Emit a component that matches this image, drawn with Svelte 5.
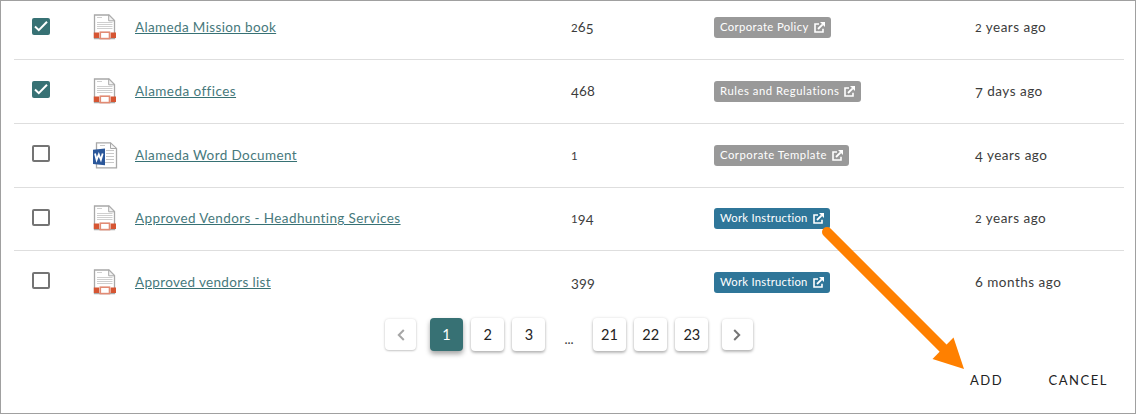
<script>
  const rows = [
    { name: 'Alameda Mission book', ls: 0.36, num: '265', tag: 'Corporate Policy', tls: 0.38, w: 117, age: '2 years ago', checked: true },
    { name: 'Alameda offices', ls: 0.44, num: '468', tag: 'Rules and Regulations', tls: 0.54, w: 147, age: '7 days ago', checked: true },
    { name: 'Alameda Word Document', ls: 0.4, num: '1', tag: 'Corporate Template', tls: 0.5, w: 135, age: '4 years ago', word: true },
    { name: 'Approved Vendors - Headhunting Services', ls: 0.39, num: '194', tag: 'Work Instruction', tls: 0.24, w: 116, age: '2 years ago', blue: true },
    { name: 'Approved vendors list', ls: 0.33, num: '399', tag: 'Work Instruction', tls: 0.24, w: 116, age: '6 months ago', blue: true }
  ];
</script>

{#snippet digits(text)}{#each text as c}{#if '012'.includes(c)}<span class="low">{c}</span>{:else if '34579'.includes(c)}<span class="desc">{c}</span>{:else}{c}{/if}{/each}{/snippet}

<main>
  <div class="table">
    {#each rows as row, i}
      <div class="row" class:short={i === 3}>
        <div class="box" class:checked={row.checked}>
          {#if row.checked}
            <svg width="18" height="17" viewBox="0 0 18 17"><path d="M3 8.5 6.8 12.2 15 3.8" fill="none" stroke="#fff" stroke-width="2" /></svg>
          {/if}
        </div>
        <svg class="file" width="26" height="28" viewBox="0 0 26 28">
          {#if row.word}
            <path d="M4.5 .8H18.5L24.5 6.5V25.8H4.5Z" fill="#fff" stroke="#a8a8a8" stroke-width="1.3" />
            <path d="M18.5 1V6.5H24.5Z" fill="#f4f4f4" stroke="#a8a8a8" />
            <path d="M8 3.5H13M14 8.5H22M14 11.5H22M14 14.5H22M14 17.5H22M10 20.5H22" stroke="#c8c8c8" />
            <path d="M1 7.7 13 6.4V23.2L1 22Z" fill="#2b579a" />
            <path d="M3 11.5 4.6 17.8 6.8 12.5 8.9 17.8 10.7 11.5" fill="none" stroke="#fff" stroke-width="1.8" />
          {:else}
            <path d="M2.5 1H17L22.5 6.5V24.5H2.5Z" fill="#fff" stroke="#a8a8a8" stroke-width="1.3" />
            <path d="M16.7 1V6.8H22.5Z" fill="#f4f4f4" stroke="#a8a8a8" />
            <path d="M5 3.5H10M5 8.5H20.5M5 10.5H20.5M5 12.5H20.5M5 14.5H20.5" stroke="#cfcfcf" />
            <path d="M1.8 18.6H7.2V24H1.8ZM18.6 18.6H24V24H18.6Z" fill="#d65532" />
            <rect x="8.3" y="18.2" width="9.2" height="6.4" fill="#fff" stroke="#e28b74" stroke-width="1.6" />
          {/if}
        </svg>
        <div class="name"><a href="#file" style="letter-spacing:{row.ls}px">{row.name}</a></div>
        <div class="num">{@render digits(row.num)}</div>
        <div>
          <div class="tag" class:blue={row.blue} style="width:{row.w}px">
            <span style="letter-spacing:{row.tls}px">{row.tag}</span>
            <svg width="11" height="11" viewBox="0 0 11 11">
              <path d="M5 2H1V10H9V6.8" fill="none" stroke="#fff" stroke-width="1.6" />
              <path d="M4 7 8.7 2.3" stroke="#fff" stroke-width="1.8" />
              <path d="M6 0H11V5Z" fill="#fff" />
            </svg>
          </div>
        </div>
        <div class="age">{@render digits(row.age)}</div>
      </div>
    {/each}
  </div>

  <nav>
    <button class="step prev" aria-label="Previous"><svg width="8" height="12" viewBox="0 0 8 12"><path d="M6.8 1 1.8 6 6.8 11" fill="none" stroke="#a6a6a6" stroke-width="2" /></svg></button>
    <button class="active">1</button>
    <button>2</button>
    <button>3</button>
    <span class="dots">...</span>
    <button>21</button>
    <button>22</button>
    <button>23</button>
    <button class="step next" aria-label="Next"><svg width="8" height="12" viewBox="0 0 8 12"><path d="M1.2 1 6.2 6 1.2 11" fill="none" stroke="#757575" stroke-width="2" /></svg></button>
  </nav>

  <footer><button class="add">ADD</button><button>CANCEL</button></footer>

  <svg class="arrow" width="150" height="150" viewBox="820 225 150 150">
    <path d="M827 232 945 350" stroke="#ff8000" stroke-width="10" stroke-linecap="round" />
    <path d="M964 369 932.5 359 953.5 337.5Z" fill="#ff8000" />
  </svg>
</main>

<style>
  :global(body) { margin: 0; background: #fff; }
  main { position: relative; box-sizing: border-box; width: 1136px; height: 414px; overflow: hidden; border: 1px solid #a0a0a0; font-family: Lato, sans-serif; font-size: 13.5px; color: #3c3c3c; }
  .table { margin: -5px 11px 0 13px; }
  .row { display: grid; grid-template-columns: 78px 43px 436px 143px 261px 1fr; height: 64px; box-sizing: border-box; border-bottom: 1px solid #dedede; align-items: start; padding-top: 21px; }
  .row.short { height: 63px; padding-top: 20px; }
  .row:last-child { border: 0; }
  .box { margin-left: 18px; width: 18px; height: 17px; box-sizing: border-box; border: 2px solid #747474; border-radius: 2px; }
  .row.short .box, .row:first-child .box { margin-top: 1px; }
  .checked { border: 0; background: #377174; }
  .box svg { display: block; }
  .file { margin-top: -3px; }
  .name, .num, .age { line-height: 21px; white-space: nowrap; }
  a { color: #47797c; text-decoration: underline; text-decoration-color: #377174; text-decoration-thickness: 1px; text-underline-offset: 1px; }
  .num { letter-spacing: .1px; }
  .age { letter-spacing: .48px; }
  .low { font-size: 11.5px; }
  .desc { position: relative; top: 2px; }
  .tag { display: flex; justify-content: space-between; align-items: center; box-sizing: border-box; height: 21px; padding: 0 6px; border-radius: 3px; background: #999; color: #fff; font-size: 11.3px; line-height: 20px; white-space: nowrap; }
  .tag span { height: 21px; }
  .blue { background: #2f7699; }
  nav { display: flex; margin: 3px 0 0 384px; height: 33px; align-items: center; }
  button { border: 0; padding: 0; background: #fff; font: 15px Lato, sans-serif; color: #222; }
  nav button { width: 33px; height: 33px; margin-right: 8.2px; border-radius: 4px; box-shadow: 0 2px 3px rgba(0,0,0,.26), 0 0 3px rgba(0,0,0,.12); display: grid; place-items: center; flex: none; }
  nav button:not(.step) { font-size: 14.5px; padding-bottom: 1px; }
  nav .step { width: 31px; height: 31px; }
  nav .prev { margin-right: 14px; box-shadow: 0 1px 2px rgba(0,0,0,.18), 0 0 3px rgba(0,0,0,.12); }
  nav .next { margin-left: 5px; }
  nav .active { background: #377174; color: #fff; box-shadow: 0 3px 5px rgba(0,0,0,.36); }
  .dots { width: 33px; margin-right: 7.4px; margin-left: -1px; text-align: center; padding-top: 8px; font-size: 13px; }
  footer { display: flex; margin: 20px 0 0 969px; }
  footer button { height: 18px; font-size: 13px; letter-spacing: 1.5px; }
  .add { margin-right: 45.5px; }
  .arrow { position: absolute; left: 819px; top: 224px; }
</style>
